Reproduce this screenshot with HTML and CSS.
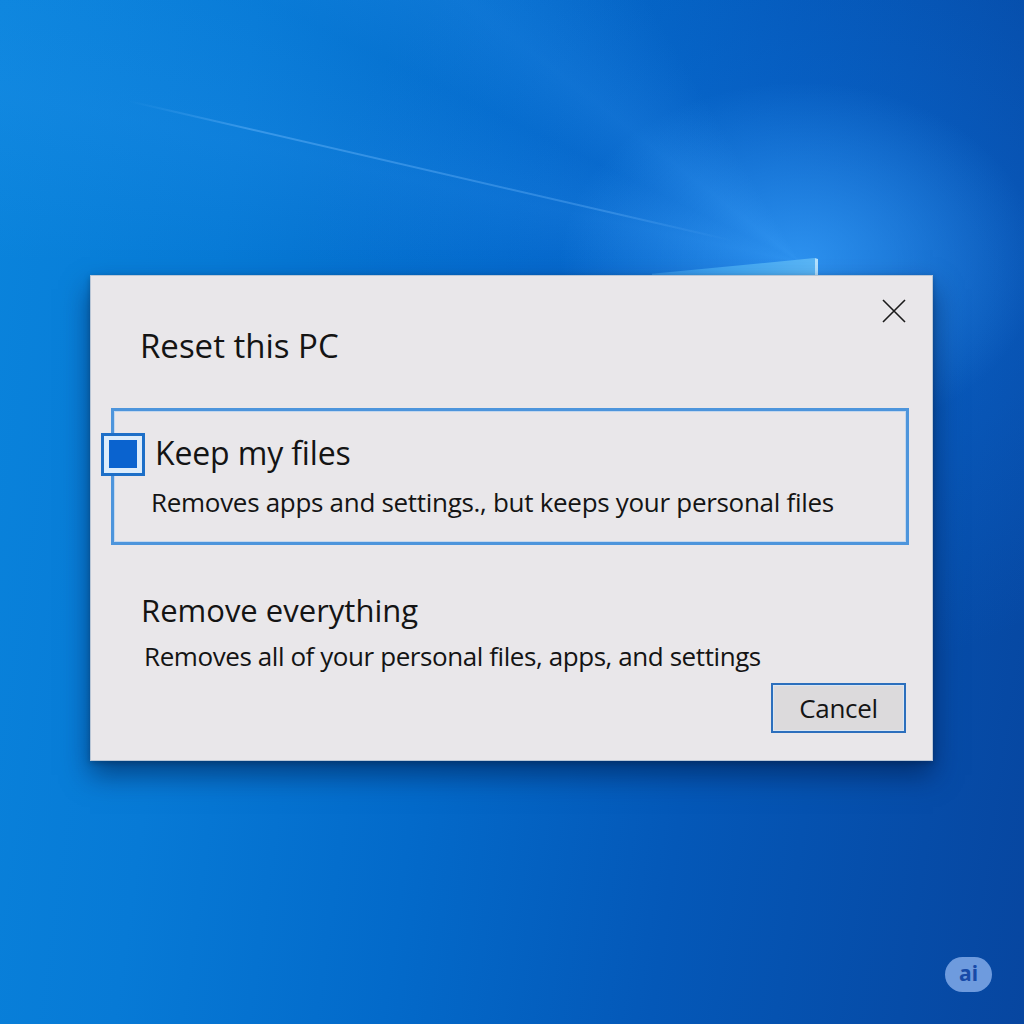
FILE: index.html
```html
<!DOCTYPE html>
<html lang="en">
<head>
<meta charset="utf-8">
<title>Reset this PC</title>
<link rel="stylesheet" href="styles.css">
</head>
<body>
<div class="desktop">
  <div class="rays"></div>
  <div class="streak"></div>
  <div class="logo-pane"></div>

  <section class="dialog" role="dialog" aria-labelledby="dlg-title">
    <button class="close" aria-label="Close">
      <svg width="24" height="24" viewBox="0 0 24 24"><path d="M1 1 L23 23 M23 1 L1 23" stroke="#1b1b1b" stroke-width="1.6" fill="none"/></svg>
    </button>
    <h1 class="title" id="dlg-title">Reset this PC</h1>

    <div class="option selected">
      <span class="check"><span class="check-fill"></span></span>
      <div class="option-name">Keep my files</div>
      <div class="option-desc">Removes apps and settings., but keeps your personal files</div>
    </div>

    <div class="option plain">
      <div class="option-name small">Remove everything</div>
      <div class="option-desc">Removes all of your personal files, apps, and settings</div>
    </div>

    <div class="actions">
      <button class="btn">Cancel</button>
    </div>
  </section>

  <div class="badge">ai</div>
</div>
</body>
</html>
```

FILE: styles.css
```css
* { box-sizing: border-box; }

html, body {
  margin: 0;
  padding: 0;
}

body {
  font-family: "Open Sans", "Noto Sans", sans-serif;
  color: #141414;
}

/* Desktop wallpaper */
.desktop {
  position: relative;
  width: 1024px;
  height: 1024px;
  overflow: hidden;
  padding: 275px 0 0 90px;
  background:
    radial-gradient(ellipse 240px 180px at 800px 262px, rgba(60, 165, 255, 0.7), rgba(40, 140, 240, 0) 100%),
    radial-gradient(ellipse 480px 400px at 780px 280px, rgba(15, 115, 225, 0.5), rgba(20, 120, 230, 0) 100%),
    linear-gradient(98deg, #0a84dc 0%, #077ad6 22%, #036aca 45%, #0458b8 68%, #0746a0 100%);
}

.rays {
  position: absolute;
  inset: 0;
  background: conic-gradient(from 270deg at 800px 262px,
    rgba(60, 160, 250, 0) 0deg,
    rgba(60, 160, 250, 0.14) 12deg,
    rgba(60, 160, 250, 0.04) 26deg,
    rgba(60, 160, 250, 0.18) 38deg,
    rgba(60, 160, 250, 0) 60deg,
    rgba(60, 160, 250, 0) 360deg);
  pointer-events: none;
}

.streak {
  position: absolute;
  left: 128px;
  top: 100px;
  width: 620px;
  height: 2px;
  transform-origin: 0 50%;
  transform: rotate(13deg);
  background: linear-gradient(90deg, rgba(120, 190, 255, 0), rgba(120, 190, 255, 0.4) 20%, rgba(120, 190, 255, 0.3) 80%, rgba(120, 190, 255, 0));
}

/* Top edge of the light pane peeking over the dialog */
.logo-pane {
  position: absolute;
  left: 652px;
  top: 258px;
  width: 166px;
  height: 18px;
  background: linear-gradient(90deg, rgba(70, 170, 245, 0.5), #45aaf3 55%, #5ab6f6);
  clip-path: polygon(0 88%, 98% 0, 100% 6%, 100% 100%, 0 100%);
  border-right: 3px solid #b4e2ff;
}

/* Dialog */
.dialog {
  position: relative;
  width: 843px;
  height: 486px;
  background: #e9e7ea;
  border: 1px solid #b9c6d6;
  box-shadow: 0 14px 26px rgba(0, 25, 70, 0.55), 0 2px 6px rgba(0, 0, 0, 0.25);
  padding: 48px 23px 0 20px;
}

.close {
  position: absolute;
  top: 23px;
  right: 26px;
  width: 24px;
  height: 24px;
  padding: 0;
  border: 0;
  background: none;
  display: flex;
}

.title {
  margin: 0 0 40px 29px;
  font-weight: 400;
  font-size: 33px;
  line-height: 44px;
  letter-spacing: 0;
}

.option {
  position: relative;
}

.option.selected {
  height: 137px;
  border: 3px solid #4d95dc;
  box-shadow: inset 0 0 0 1px rgba(170, 205, 240, 0.6);
  padding: 22px 0 0 41px;
}

.check {
  position: absolute;
  left: -13px;
  top: 22px;
  width: 44px;
  height: 43px;
  border: 3px solid #1d6fc8;
  background: #dcecfb;
  padding: 4px 5px 5px 5px;
  display: flex;
}

.check-fill {
  flex: 1;
  background: #0a63cf;
}

.option-name {
  font-size: 32px;
  line-height: 40px;
  letter-spacing: -0.15px;
}

.option-name.small {
  font-size: 31px;
  letter-spacing: 0;
}

.option-desc {
  margin-top: 13px;
  font-size: 26px;
  line-height: 32px;
  letter-spacing: -0.3px;
}

.selected .option-desc {
  margin-left: -4px;
}

.option.plain {
  margin-top: 45px;
  padding-left: 30px;
}

.option.plain .option-desc {
  padding-left: 3px;
  margin-top: 10px;
  letter-spacing: -0.42px;
}

.actions {
  display: flex;
  justify-content: flex-end;
  margin-top: 11px;
  padding-right: 3px;
}

.btn {
  width: 135px;
  height: 50px;
  border: 2px solid #2c6fbd;
  box-shadow: inset 0 0 0 1px #d9e6f3;
  background: #dcdadc;
  font-family: inherit;
  font-size: 26px;
  color: #141414;
  letter-spacing: -0.3px;
  padding: 0;
}

/* Corner badge */
.badge {
  position: absolute;
  left: 945px;
  top: 957px;
  width: 47px;
  height: 35px;
  border-radius: 18px;
  background: rgba(140, 178, 238, 0.78);
  color: #174aa8;
  font-family: "Noto Sans", sans-serif;
  font-weight: 700;
  font-size: 21px;
  line-height: 33px;
  text-align: center;
}
```
